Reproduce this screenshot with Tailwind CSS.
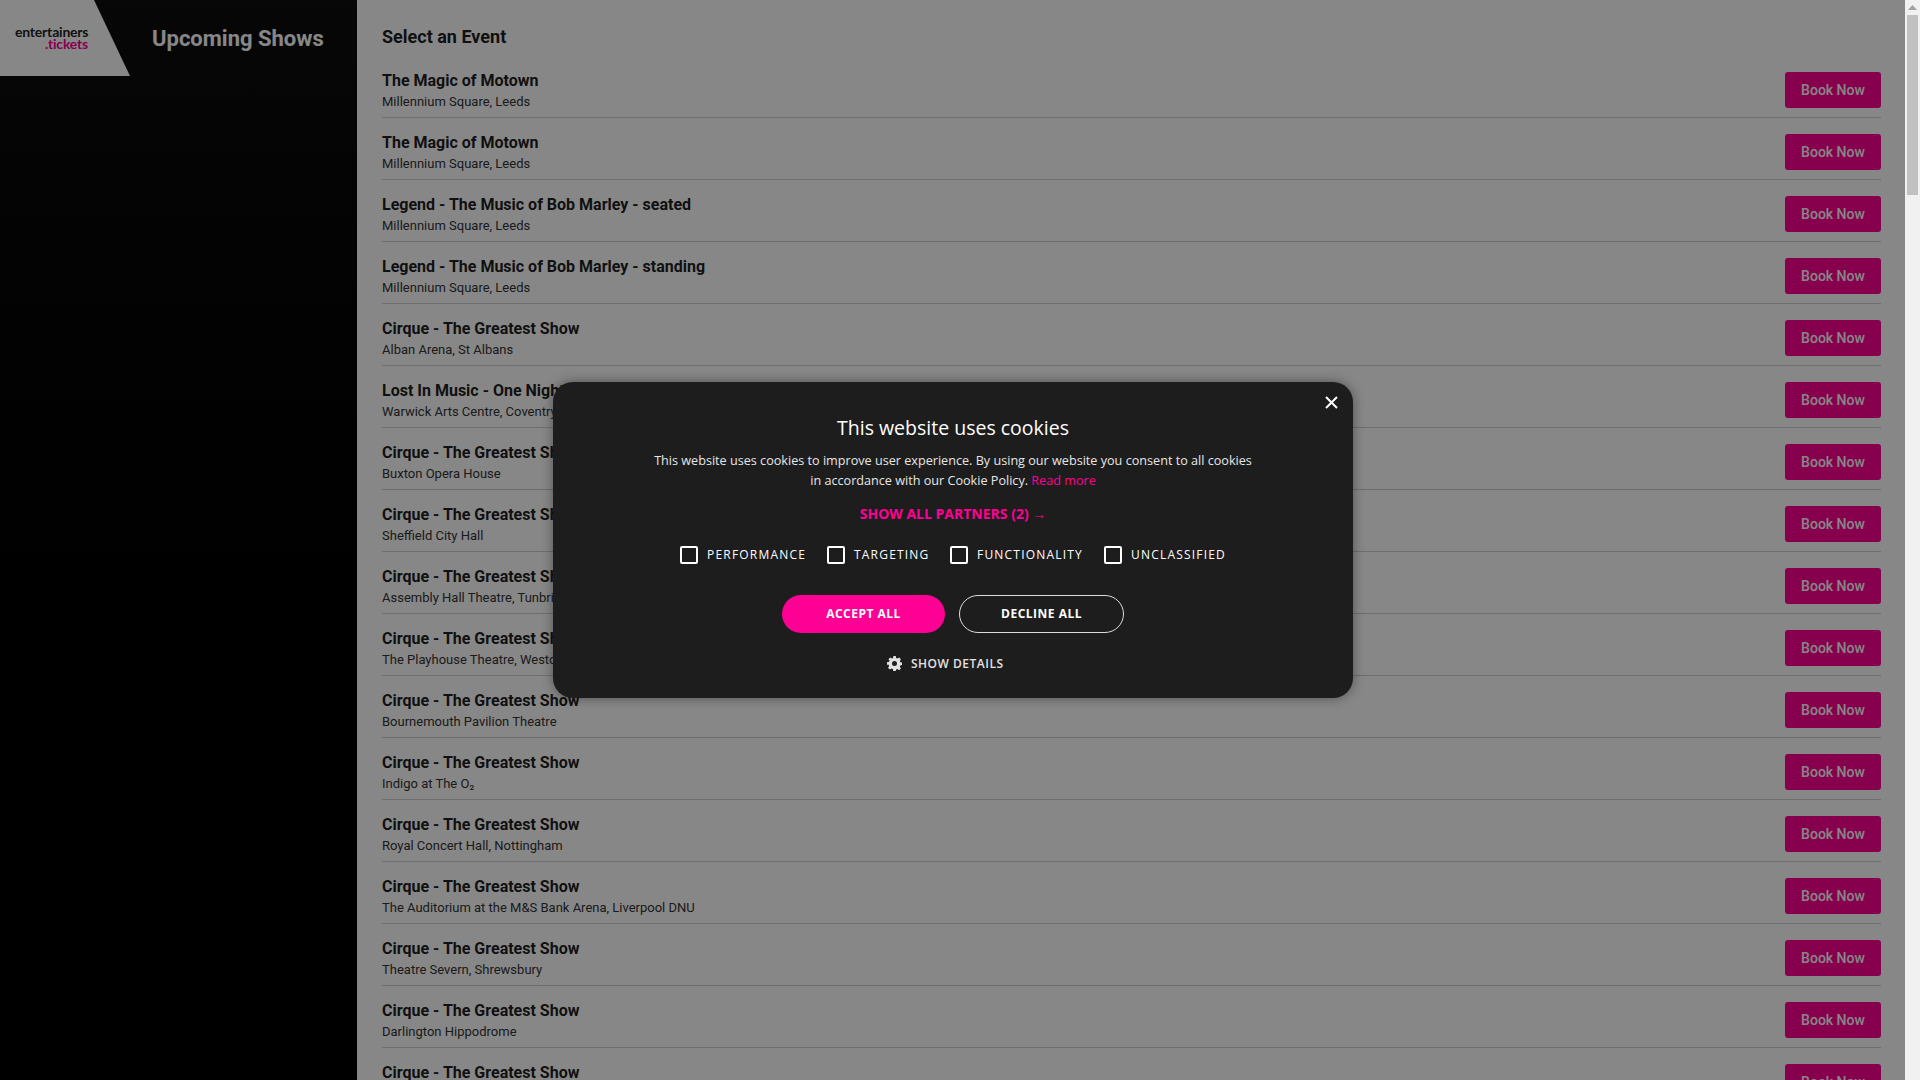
<!DOCTYPE html>
<html lang="en">
<head>
  <meta charset="UTF-8" />
  <title>Upcoming Shows</title>
  <meta name="viewport" content="width=device-width, initial-scale=1" />
  <script src="https://cdn.jsdelivr.net/npm/@tailwindcss/browser@4"></script>
</head>
<body class="bg-white text-[#1f1f1f] font-['Roboto',sans-serif]">

  <div class="relative flex h-[1080px] w-[1920px] overflow-hidden">

    <div class="flex w-[1905px] shrink-0">
      <!-- Sidebar -->
      <aside class="w-[357px] shrink-0 bg-gradient-to-b from-[#0e0e0e] to-black">
        <div class="flex h-[76px] items-center">
          <div class="flex h-[76px] w-[130px] flex-col pl-[15px] pt-[26px] text-[14px] font-bold leading-[12px] tracking-[-0.2px] font-['Lato',sans-serif] [clip-path:polygon(0_0,94px_0,130px_100%,0_100%)] bg-white">
            <span class="w-[73px] whitespace-nowrap text-right text-[#1f1f1f]">entertainers</span>
            <span class="w-[73px] whitespace-nowrap text-right text-[#ff0094]">.tickets</span>
          </div>
          <h2 class="ml-[22px] text-[22px] font-bold text-white">Upcoming Shows</h2>
        </div>
      </aside>

      <!-- Events -->
      <main class="flex-1 pl-[25px] pr-[24px]">
        <h1 class="h-[56px] pt-[24px] text-[18px] font-bold leading-[26px]">Select an Event</h1>
        <div id="eventList"></div>
      </main>
    </div>

    <!-- Fake scrollbar -->
    <div class="flex w-[15px] shrink-0 flex-col items-center bg-[#f1f1f1] pt-[5px]">
      <svg width="9" height="5" viewBox="0 0 9 5"><path d="M4.5 0 9 5H0z" fill="#a3a3a3"/></svg>
      <div class="mt-[5px] h-[180px] w-[11px] bg-[#c1c1c1]"></div>
    </div>

    <!-- Dim layer -->
    <div class="absolute inset-y-0 left-0 w-[1905px] bg-black/47"></div>

    <!-- Cookie dialog -->
    <div class="absolute left-[553px] top-[382px] h-[316px] w-[800px] rounded-[20px] bg-[#1d1d1d] text-white shadow-[0_0_12px_rgba(0,0,0,0.4)] font-['Open_Sans',sans-serif]">
      <button class="absolute right-[15px] top-[14px]">
        <svg width="13" height="13" viewBox="0 0 13 13"><path d="M1 1l11 11M12 1 1 12" stroke="#fff" stroke-width="2"/></svg>
      </button>

      <h3 class="mt-[33px] text-center text-[19.500px] font-medium leading-[26px]">This website uses cookies</h3>
      <p class="mt-[9px] text-center text-[12.640px] leading-[20px] text-[#e6e6e6]">
        This website uses cookies to improve user experience. By using our website you consent to all cookies<br />
        in accordance with our Cookie Policy. <span class="text-[#ff0094]">Read more</span>
      </p>
      <p class="mt-[14px] text-center text-[14px] font-bold leading-[20px] text-[#ff0094]">SHOW ALL PARTNERS (2) <span class="font-normal">→</span></p>

      <div class="ml-[127px] mt-[22px] flex h-[18px] items-center text-[12px] font-medium tracking-[1.2px]">
        <span class="h-[18px] w-[18px] rounded-[2px] border-2 border-white"></span>
        <span class="ml-[9px] w-[120px]">PERFORMANCE</span>
        <span class="h-[18px] w-[18px] rounded-[2px] border-2 border-white"></span>
        <span class="ml-[9px] w-[96px]">TARGETING</span>
        <span class="h-[18px] w-[18px] rounded-[2px] border-2 border-white"></span>
        <span class="ml-[9px] w-[127px]">FUNCTIONALITY</span>
        <span class="h-[18px] w-[18px] rounded-[2px] border-2 border-white"></span>
        <span class="ml-[9px]">UNCLASSIFIED</span>
      </div>

      <div class="ml-[229px] mt-[31px] flex gap-[14px] text-[12px] font-bold tracking-[0.5px]">
        <button class="h-[38px] w-[163px] rounded-full bg-[#ff0094]">ACCEPT ALL</button>
        <button class="h-[38px] w-[165px] rounded-full border border-[#dcdcdc]">DECLINE ALL</button>
      </div>

      <div class="ml-[334px] mt-[22px] flex items-center gap-[9px] text-[12px] font-semibold tracking-[0.5px] text-[#e2e2e2]">
        <svg class="-mt-[2px]" width="15" height="15" viewBox="0 0 24 24" fill="#e2e2e2"><path fill-rule="evenodd" d="M10 0h4l.7 3.3 2 .8L19.500 2.300l2.800 2.800-1.800 2.800.8 2 3.300.7v3.800l-3.300.7-.8 2 1.800 2.800-2.800 2.800-2.800-1.800-2 .8L14 24h-4l-.7-3.300-2-.8-2.800 1.800-2.800-2.800 1.800-2.800-.8-2L0 13.800V10l3.300-.7.8-2L2.300 5.100l2.800-2.800 2.800 1.800 2-.8zM12 8a4 4 0 1 0 0 8 4 4 0 0 0 0-8z"/></svg>
        <span>SHOW DETAILS</span>
      </div>
    </div>
  </div>

  <script>
    const events = [
      ["The Magic of Motown", "Millennium Square, Leeds"],
      ["The Magic of Motown", "Millennium Square, Leeds"],
      ["Legend - The Music of Bob Marley - seated", "Millennium Square, Leeds"],
      ["Legend - The Music of Bob Marley - standing", "Millennium Square, Leeds"],
      ["Cirque - The Greatest Show", "Alban Arena, St Albans"],
      ["Lost In Music - One Night at the Disco", "Warwick Arts Centre, Coventry"],
      ["Cirque - The Greatest Show", "Buxton Opera House"],
      ["Cirque - The Greatest Show", "Sheffield City Hall"],
      ["Cirque - The Greatest Show", "Assembly Hall Theatre, Tunbridge Wells"],
      ["Cirque - The Greatest Show", "The Playhouse Theatre, Weston-super-Mare"],
      ["Cirque - The Greatest Show", "Bournemouth Pavilion Theatre"],
      ["Cirque - The Greatest Show", "Indigo at The O₂"],
      ["Cirque - The Greatest Show", "Royal Concert Hall, Nottingham"],
      ["Cirque - The Greatest Show", "The Auditorium at the M&S Bank Arena, Liverpool DNU"],
      ["Cirque - The Greatest Show", "Theatre Severn, Shrewsbury"],
      ["Cirque - The Greatest Show", "Darlington Hippodrome"],
      ["Cirque - The Greatest Show", "Whitley Bay Playhouse"]
    ];

    document.getElementById("eventList").innerHTML = events.map(e => `
      <div class="flex h-[62px] items-start justify-between border-b border-[#d0d0d0] pt-[16px]">
        <div class="-mt-[2px]">
          <div class="text-[16px] font-bold leading-[22px]">${e[0]}</div>
          <div class="text-[13px] leading-[20px] text-[#333]">${e[1].replace("&", "&amp;")}</div>
        </div>
        <a class="flex h-[36px] w-[96px] items-center justify-center rounded-[3px] bg-[#ff0094] text-[14px] font-medium text-white">Book Now</a>
      </div>
    `).join("");
  </script>
</body>
</html>
